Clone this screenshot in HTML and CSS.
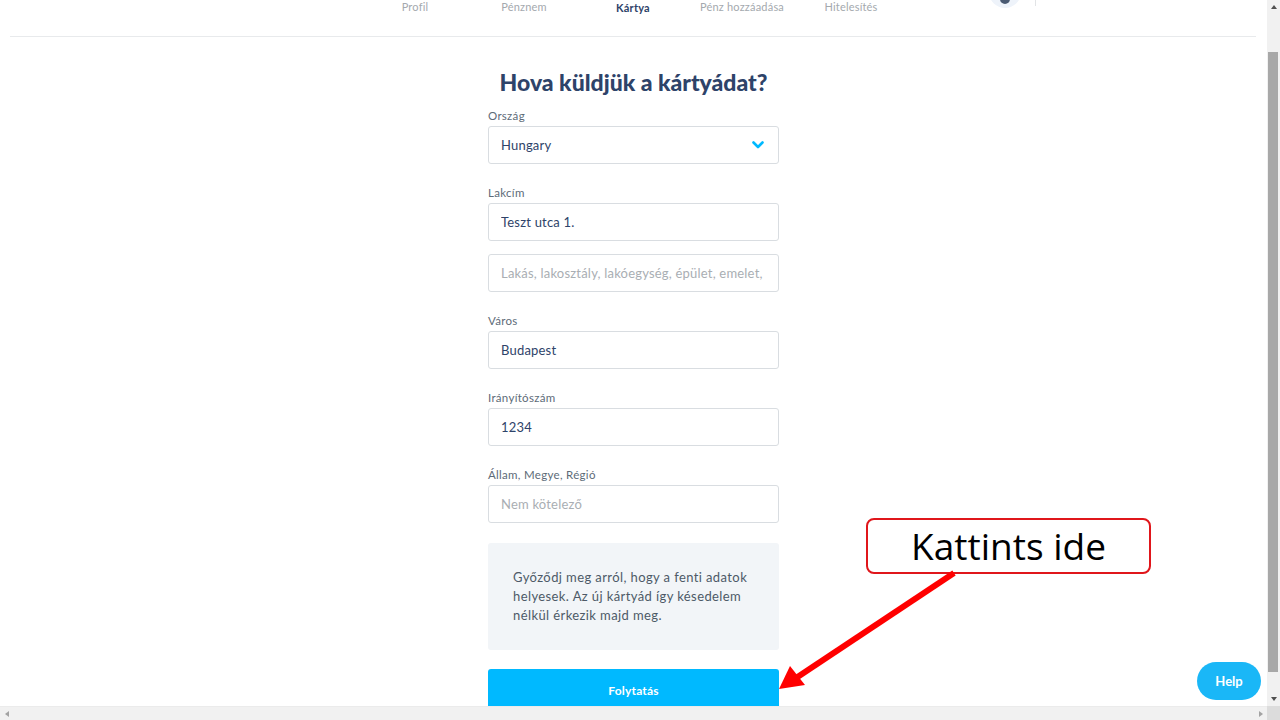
FILE: index.html
```html
<!DOCTYPE html>
<html lang="hu">
<head>
<meta charset="utf-8">
<title>Hova küldjük a kártyádat?</title>
<link rel="stylesheet" href="styles.css">
</head>
<body>
<div class="window">
  <div class="viewport">
    <header class="topbar">
      <div class="side"></div>
      <nav class="steps">
        <span class="step">Profil</span>
        <span class="step">Pénznem</span>
        <span class="step active">Kártya</span>
        <span class="step">Pénz hozzáadása</span>
        <span class="step">Hitelesítés</span>
      </nav>
      <div class="side user">
        <div class="avatar-wrap"><div class="avatar"><div class="avatar-dot"></div></div></div>
        <div class="divider"></div>
      </div>
    </header>

    <main class="form">
      <h1 class="title">Hova küldjük a kártyádat?</h1>

      <div class="field">
        <label class="label">Ország</label>
        <div class="control select">
          <span class="value">Hungary</span>
          <svg class="chev" width="12" height="8" viewBox="0 0 12 8"><path d="M1.5 1.5 L6 6 L10.5 1.5" fill="none" stroke="#00b9ff" stroke-width="2.6" stroke-linecap="round" stroke-linejoin="round"/></svg>
        </div>
      </div>

      <div class="field">
        <label class="label">Lakcím</label>
        <input class="control" type="text" value="Teszt utca 1.">
        <input class="control extra" type="text" placeholder="Lakás, lakosztály, lakóegység, épület, emelet, stb.">
      </div>

      <div class="field">
        <label class="label">Város</label>
        <input class="control" type="text" value="Budapest">
      </div>

      <div class="field">
        <label class="label">Irányítószám</label>
        <input class="control" type="text" value="1234">
      </div>

      <div class="field">
        <label class="label">Állam, Megye, Régió</label>
        <input class="control" type="text" placeholder="Nem kötelező">
      </div>

      <div class="notice">Győződj meg arról, hogy a fenti adatok helyesek. Az új kártyád így késedelem nélkül érkezik majd meg.</div>

      <button class="primary" type="button">Folytatás</button>
    </main>

    <button class="help" type="button">Help</button>

    <div class="callout">Kattints ide</div>
    <svg class="arrow" width="1267" height="706" viewBox="0 0 1267 706">
      <line x1="954" y1="573" x2="796" y2="678" stroke="#ff0000" stroke-width="6"/>
      <polygon points="779,689 790,666 805,685" fill="#ff0000"/>
    </svg>
  </div>

  <div class="vscroll">
    <div class="sb-arrow up"></div>
    <div class="vtrack"><div class="vthumb"></div></div>
    <div class="sb-arrow down"></div>
  </div>
  <div class="hscroll">
    <div class="sb-arrow left"></div>
    <div class="htrack"></div>
    <div class="sb-arrow right"></div>
  </div>
  <div class="corner"></div>
</div>
</body>
</html>
```

FILE: styles.css
```css
* { box-sizing: border-box; }

html, body {
  margin: 0;
  padding: 0;
  background: #ffffff;
}

body {
  font-family: "Lato", "Noto Sans", sans-serif;
  color: #2e4369;
}

.window {
  display: grid;
  grid-template-columns: 1fr 13px;
  grid-template-rows: 1fr 14px;
  width: 1280px;
  height: 720px;
  overflow: hidden;
}

.viewport {
  position: relative;
  overflow: hidden;
  background: #ffffff;
}

/* Header */
.topbar {
  display: grid;
  grid-template-columns: 1fr 545px 1fr;
  height: 37px;
  margin: 0 11px 0 10px;
  border-bottom: 1px solid #e8eaec;
}

.steps {
  display: grid;
  grid-template-columns: repeat(5, 1fr);
  align-items: start;
}

.step {
  text-align: center;
  font-size: 11px;
  line-height: 14px;
  letter-spacing: 0.2px;
  color: #a4a9ae;
}

.step.active {
  color: #2e4369;
  font-weight: 700;
  padding-top: 1px;
}

.user {
  display: flex;
  align-items: flex-start;
  padding-left: 83px;
}

.avatar-wrap {
  width: 32px;
  height: 8px;
  overflow: hidden;
  display: flex;
  align-items: flex-end;
}

.avatar {
  flex: none;
  width: 32px;
  height: 32px;
  border-radius: 50%;
  background: #eef3fa;
  display: flex;
  align-items: flex-end;
  justify-content: center;
}

.avatar-dot {
  width: 10px;
  height: 5px;
  margin-bottom: 4px;
  border-radius: 0 0 5px 5px;
  background: #4a5a72;
}

.divider {
  width: 1px;
  height: 6px;
  margin-left: 14px;
  background: #e2e4e6;
}

/* Form */
.form {
  width: 291px;
  margin: 0 auto;
  padding-top: 30px;
}

.title {
  margin: 0 -20px 10px;
  text-align: center;
  font-size: 23px;
  line-height: 30px;
  font-weight: 900;
  color: #2e4369;
}

.field {
  display: flex;
  flex-direction: column;
  margin-bottom: 20px;
}

.label {
  font-size: 11.5px;
  line-height: 17px;
  letter-spacing: 0.3px;
  color: #5d6b78;
  margin-bottom: 2px;
}

.control {
  display: flex;
  align-items: center;
  width: 100%;
  height: 38px;
  padding: 0 12px;
  border: 1px solid #d9dde1;
  border-radius: 3px;
  background: #ffffff;
  font-family: inherit;
  font-size: 13px;
  letter-spacing: 0.2px;
  color: #2e4369;
  outline: none;
}

.control::placeholder {
  color: #a9aeb3;
}

.control.extra {
  margin-top: 13px;
}

.select {
  justify-content: space-between;
  padding-right: 14px;
}

.chev {
  display: block;
}

.notice {
  margin-bottom: 19px;
  padding: 25px 20px 25px 25px;
  background: #f2f5f8;
  border-radius: 3px;
  font-size: 13px;
  line-height: 19px;
  letter-spacing: 0.4px;
  color: #4d5a67;
}

.primary {
  display: block;
  width: 100%;
  height: 42px;
  border: 0;
  border-radius: 3px;
  background: #00b9ff;
  color: #ffffff;
  font-family: inherit;
  font-size: 12px;
  font-weight: 700;
  letter-spacing: 0.2px;
}

/* Floating help */
.help {
  position: absolute;
  left: 1197px;
  top: 662px;
  width: 64px;
  height: 38px;
  border: 0;
  border-radius: 19px;
  background: #1ab7f7;
  color: #ffffff;
  font-family: inherit;
  font-size: 13px;
  font-weight: 700;
}

/* Annotation overlay */
.callout {
  position: absolute;
  left: 866px;
  top: 518px;
  width: 285px;
  height: 56px;
  border: 2px solid #e0161b;
  border-radius: 8px;
  background: #ffffff;
  color: #000000;
  font-family: "Open Sans", "Liberation Sans", sans-serif;
  font-size: 37px;
  line-height: 52px;
  text-align: center;
}

.arrow {
  position: absolute;
  left: 0;
  top: 0;
  pointer-events: none;
}

/* Scrollbars */
.vscroll {
  display: flex;
  flex-direction: column;
  background: #f1f1f1;
}

.vtrack {
  flex: 1;
  padding: 38px 2px 20px 1px;
  display: flex;
}

.vthumb {
  flex: 1;
  background: #a8a8a8;
}

.hscroll {
  display: flex;
  background: #f1f1f1;
  border-top: 1px solid #ebebeb;
}

.htrack { flex: 1; }

.corner { background: #dcdcdc; }

.sb-arrow {
  flex: none;
  width: 13px;
  height: 14px;
  display: flex;
  align-items: center;
  justify-content: center;
}

.sb-arrow::before {
  content: "";
  width: 0;
  height: 0;
  border: 3px solid transparent;
}

.sb-arrow.up::before { border-bottom: 4px solid #505050; border-top-width: 0; }
.sb-arrow.down::before { border-top: 4px solid #505050; border-bottom-width: 0; }
.sb-arrow.left::before { border-right: 4px solid #a3a3a3; border-left-width: 0; }
.sb-arrow.right::before { border-left: 4px solid #a3a3a3; border-right-width: 0; }
```
